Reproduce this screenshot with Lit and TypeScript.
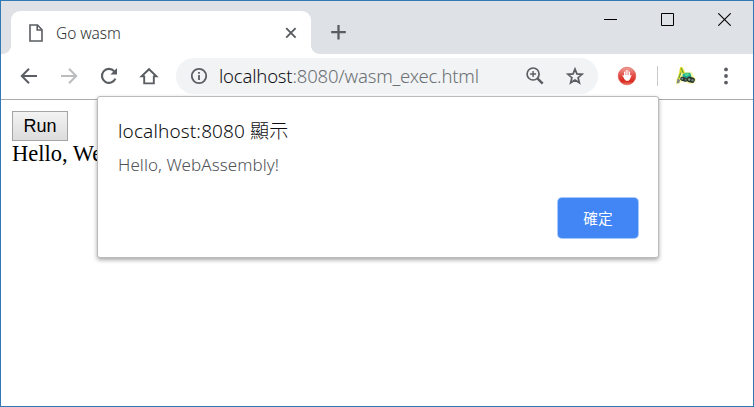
import { LitElement, html, css } from "lit";
import { customElement } from "lit/decorators.js";

const icons = {
  page: html`<svg width="14" height="18" viewBox="0 0 14 18" fill="none" stroke="#5a5d61" stroke-width="1.6"><path d="M1 1h7.5L13 5.7V17H1z"/><path d="M8.2 1v5H13"/></svg>`,
  tabClose: html`<svg width="12" height="12" viewBox="0 0 12 12" stroke="#5a5d61" stroke-width="1.9"><path d="M1.2 1.2l9.4 9.4M10.6 1.2L1.2 10.6"/></svg>`,
  plus: html`<svg width="16" height="16" viewBox="0 0 16 16" stroke="#5a5d61" stroke-width="2.3"><path d="M8.5 1v14.4M1.2 8.2h14.6"/></svg>`,
  back: html`<svg width="20" height="20" viewBox="0 0 20 20" fill="none" stroke="#5a5d61" stroke-width="2"><path d="M18 10H3M10 2.8L2.8 10l7.2 7.2"/></svg>`,
  forward: html`<svg width="20" height="20" viewBox="0 0 20 20" fill="none" stroke="#babcbe" stroke-width="2"><path d="M2 10h15M10 2.8l7.2 7.2-7.2 7.2"/></svg>`,
  reload: html`<svg width="20" height="20" viewBox="0 0 20 20" fill="none" stroke="#5a5d61" stroke-width="2.1"><path d="M16.4 12.6A7 7 0 1 1 15.2 5.2"/><path d="M18 2v6.6h-6.6z" fill="#5a5d61" stroke="none"/></svg>`,
  home: html`<svg width="20" height="20" viewBox="0 0 20 20" fill="none" stroke="#5a5d61" stroke-width="1.9"><path d="M2.6 10.4h2.6v7h9.6v-7h2.6L10 3.2z" stroke-linejoin="miter"/></svg>`,
  info: html`<svg width="18" height="18" viewBox="0 0 18 18" fill="none" stroke="#5a5d61" stroke-width="1.8"><circle cx="9" cy="9" r="7.2"/><path d="M9 8v5M9 5v1.8"/></svg>`,
  zoom: html`<svg width="20" height="20" viewBox="0 0 20 20" fill="none" stroke="#5a5d61" stroke-width="1.7"><circle cx="8.1" cy="8" r="6"/><path d="M12.4 12.4l5.3 5.3" stroke-width="2.4"/><path d="M8.1 5v6M5.1 8h6" stroke-width="1.4"/></svg>`,
  star: html`<svg width="20" height="20" viewBox="0 0 20 20" fill="none" stroke="#5a5d61" stroke-width="1.7"><path d="M10 3.1l1.9 4.8 5.2.4-4 3.4 1.3 5.1-4.4-2.8-4.4 2.8 1.3-5.1-4-3.4 5.2-.4z"/></svg>`,
  hand: html`<svg width="20" height="20" viewBox="0 0 20 20"><defs><linearGradient id="red" x1="0" y1="0" x2="0" y2="1"><stop offset="0" stop-color="#f1a29c"/><stop offset=".45" stop-color="#e25048"/><stop offset=".8" stop-color="#d92a20"/><stop offset="1" stop-color="#ee7c6c"/></linearGradient></defs><circle cx="10" cy="10" r="8.8" fill="url(#red)" stroke="#dc5a52" stroke-width=".7"/><path d="M7.6 11V6M9.2 9.5V4.6M10.9 9.5V4.6M12.5 10V6M6 9.5l2 3.1M14 9.4l-1.6 3.6" stroke="#fff" stroke-width="1.1" stroke-linecap="round"/><path d="M7.2 9h5.8v3.5l-1.3 2.3H8.8l-1.6-2.3z" fill="#fff"/></svg>`,
  digger: html`<svg width="22" height="20" viewBox="0 0 22 20"><path d="M5 1l3-.3 2.5 5.5 5.5-.6 2.5 4 2.8 4.5-3.8 3.8-4.5-.4-3.5-2.5-3 .6-3.4 3L.8 18 1 13.5l3-3z" fill="#fafaa4"/><path d="M3.4 13.5L5.2 7l1-5L9.6 9" fill="none" stroke="#d8d41c" stroke-width="2.2" stroke-linejoin="round"/><path d="M3.8 12L6 6.5M6.4 2.2L8.2 7" stroke="#4f9b4c" stroke-width="1"/><path d="M2.6 12.3l2.6 1.8-1 3-2.7.4z" fill="#848a87"/><path d="M7.6 8.3l3-1.6 4.6.1 1.4 4-5 1.6-4-1.6z" fill="#22ae98"/><path d="M9.4 7.8l4-.5.8 2-3.5.7z" fill="#5ce08c"/><rect x="5.2" y="11.2" width="7.4" height="4.2" rx="2" transform="rotate(16 9 13)" fill="#26332a"/><rect x="11.8" y="11" width="8" height="5.6" rx="2.6" transform="rotate(14 16 14)" fill="#29312a"/><circle cx="7.3" cy="12.7" r="1" fill="#7d9b92"/><circle cx="10.6" cy="13.8" r="1" fill="#5d8278"/><circle cx="14.2" cy="13.5" r="1.2" fill="#8ca597"/><circle cx="17.5" cy="14.3" r="1.2" fill="#71867b"/></svg>`,
  dots: html`<svg width="4" height="18" viewBox="0 0 4 18" fill="#5a5d61"><circle cx="2" cy="2.4" r="1.9"/><circle cx="2" cy="9" r="1.9"/><circle cx="2" cy="15.6" r="1.9"/></svg>`,
  min: html`<svg width="13" height="13" viewBox="0 0 13 13" fill="#000"><path d="M0 6h13v1H0z"/></svg>`,
  max: html`<svg width="13" height="13" viewBox="0 0 13 13" fill="none" stroke="#000"><path d="M.5.5h12v12H.5z"/></svg>`,
  close: html`<svg width="13" height="13" viewBox="0 0 13 13" fill="none" stroke="#000" stroke-width="1.1"><path d="M.3.3l12.4 12.4M12.7.3L.3 12.7"/></svg>`,
};

@customElement("app-root")
export class AppRoot extends LitElement {
  static styles = css`
    :host { display: block; }
    * { box-sizing: border-box; }
    svg { display: block; flex: none; }
    .window { position: relative; height: 407px; border: 1px solid #3079b5; background: #fff; overflow: hidden; font-family: "Noto Sans", "Noto Sans CJK TC", sans-serif; font-weight: 300; }
    .strip { height: 53px; background: #dee1e6; display: flex; align-items: flex-end; padding-left: 10px; }
    .tab { position: relative; width: 300px; height: 43px; border-radius: 9px 9px 0 0; background: #fff; display: flex; align-items: center; padding: 0 14px 0 18px; }
    .tab::before, .tab::after { content: ""; position: absolute; bottom: 0; width: 8px; height: 8px; }
    .tab::before { left: -8px; background: radial-gradient(circle at 0 0, #dee1e6 7.5px, #fff 8px); }
    .tab::after { right: -8px; background: radial-gradient(circle at 100% 0, #dee1e6 7.5px, #fff 8px); }
    .name { flex: 1; margin-left: 13px; font-size: 15.5px; letter-spacing: -.05px; color: #303234; white-space: nowrap; }
    .new { margin: 0 0 14px 19px; }
    .controls { align-self: flex-start; margin: 12px 22px 0 auto; display: flex; gap: 44px; }
    .toolbar { height: 46px; border-bottom: 1px solid #a9abae; display: flex; align-items: center; padding: 0 0 1px 8px; }
    .nav { width: 40px; display: flex; justify-content: center; }
    .address { width: 422px; height: 36px; margin-left: 7px; border-radius: 18px; background: #f1f3f4; display: flex; align-items: center; padding: 0 13px 0 14px; }
    .url { flex: 1; margin-left: 11px; padding-bottom: 2px; font-size: 18.5px; letter-spacing: -.19px; color: #6c7074; white-space: nowrap; }
    .host { color: #111214; }
    .star { margin-left: 20px; }
    .blocker { margin-left: 19px; }
    .rule { width: 1px; height: 20px; background: #c6c8ca; margin-left: 20px; }
    .digger { margin-left: 17px; }
    .menu { margin-left: 27px; }
    .page { padding: 11px; }
    .run { display: block; width: 56px; height: 30px; padding: 0; border: 1px solid #a5a5a5; border-radius: 0; background: linear-gradient(#f3f3f3, #dcdcdc); font: 18px "Liberation Sans", Arial, sans-serif; color: #000; }
    .output { font: 22.5px/26px "Liberation Serif", "Times New Roman", serif; color: #000; }
    .dialog { position: absolute; left: 96px; top: 95px; width: 562px; height: 162px; border: 1px solid #bbb; border-radius: 3px; background: #fff; box-shadow: 0 2px 4px rgba(0,0,0,.35); padding: 20px 20px 19px; display: flex; flex-direction: column; white-space: nowrap; }
    .title { font-size: 19px; line-height: 28px; letter-spacing: .13px; color: #0c0d0e; }
    .message { margin-top: 7px; font-size: 17px; line-height: 26px; letter-spacing: .08px; color: #4f5357; }
    .ok { align-self: flex-end; margin-top: auto; width: 80px; height: 40px; padding: 0 0 2px; border: 0; border-radius: 4px; background: #4285f4; box-shadow: 0 0 0 1px #a9c8fa; color: #fff; font: 400 14.7px "Noto Sans CJK TC", sans-serif; }
  `;

  render() {
    return html`
      <div class="window">
        <div class="strip">
          <div class="tab">${icons.page}<span class="name">Go wasm</span>${icons.tabClose}</div>
          <div class="new">${icons.plus}</div>
          <div class="controls">${icons.min}${icons.max}${icons.close}</div>
        </div>
        <div class="toolbar">
          ${[icons.back, icons.forward, icons.reload, icons.home].map((i) => html`<span class="nav">${i}</span>`)}
          <div class="address">
            ${icons.info}
            <span class="url"><span class="host">localhost</span>:8080/wasm_exec.html</span>
            ${icons.zoom}
            <span class="star">${icons.star}</span>
          </div>
          <span class="blocker">${icons.hand}</span>
          <span class="rule"></span>
          <span class="digger">${icons.digger}</span>
          <span class="menu">${icons.dots}</span>
        </div>
        <div class="page">
          <button class="run">Run</button>
          <div class="output">Hello, We</div>
        </div>
        <div class="dialog" role="dialog">
          <div class="title">localhost:8080 顯示</div>
          <div class="message">Hello, WebAssembly!</div>
          <button class="ok">確定</button>
        </div>
      </div>
    `;
  }
}
